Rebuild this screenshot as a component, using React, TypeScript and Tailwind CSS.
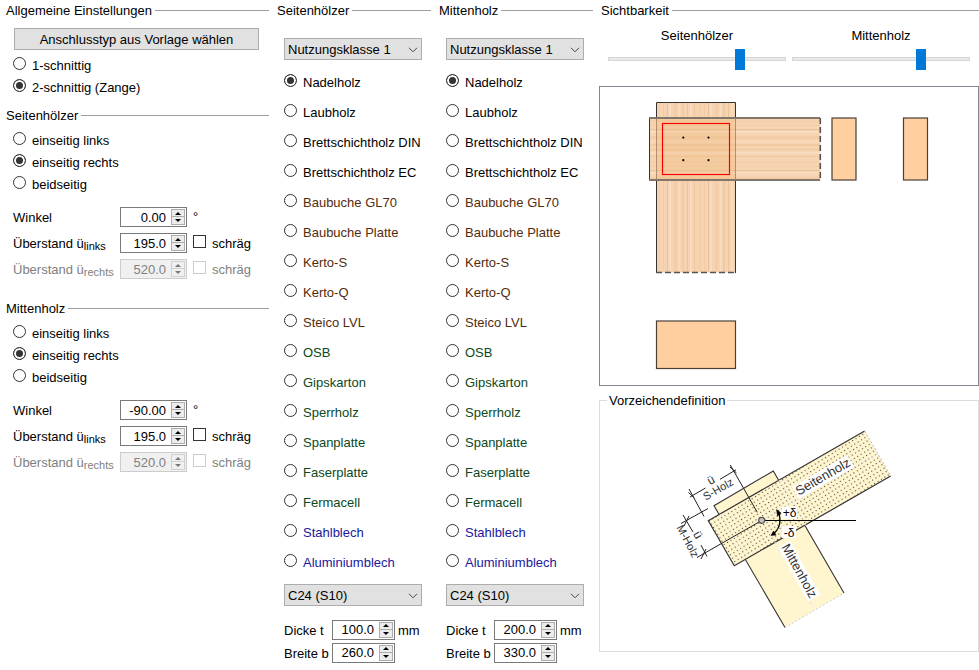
import React, { useState } from 'react'

const radioClass = 'h-[13px] w-[13px] shrink-0 appearance-none rounded-full border border-[#333] bg-white mb-[5px] checked:bg-[#333] checked:shadow-[inset_0_0_0_2px_white]'

const materials = [
  { name: 'Nadelholz', color: 'text-black' },
  { name: 'Laubholz', color: 'text-black' },
  { name: 'Brettschichtholz DIN', color: 'text-black' },
  { name: 'Brettschichtholz EC', color: 'text-black' },
  { name: 'Baubuche GL70', color: 'text-[#542c0c]' },
  { name: 'Baubuche Platte', color: 'text-[#542c0c]' },
  { name: 'Kerto-S', color: 'text-[#542c0c]' },
  { name: 'Kerto-Q', color: 'text-[#542c0c]' },
  { name: 'Steico LVL', color: 'text-[#542c0c]' },
  { name: 'OSB', color: 'text-[#0c4820]' },
  { name: 'Gipskarton', color: 'text-[#0c4820]' },
  { name: 'Sperrholz', color: 'text-[#0c4820]' },
  { name: 'Spanplatte', color: 'text-[#0c4820]' },
  { name: 'Faserplatte', color: 'text-[#0c4820]' },
  { name: 'Fermacell', color: 'text-[#0c4820]' },
  { name: 'Stahlblech', color: 'text-[#20189c]' },
  { name: 'Aluminiumblech', color: 'text-[#20189c]' },
]

const sides = ['einseitig links', 'einseitig rechts', 'beidseitig']

const Heading = ({ children }: { children: React.ReactNode }) => (
  <h2 className="flex h-5 items-center gap-[3px] whitespace-nowrap">
    <span className="pt-0.5">{children}</span>
    <span className="h-px flex-1 bg-[#a0a0a0]" />
  </h2>
)

const RadioRow = ({ name, label, checked, className }: { name: string; label: string; checked?: boolean; className: string }) => (
  <label className={`flex items-center gap-1.5 whitespace-nowrap pt-0.5 ${className}`}>
    <input type="radio" name={name} defaultChecked={checked} className={radioClass} />
    {label}
  </label>
)

const Spinner = ({ id, value, step = 1, disabled, className }: { id: string; value: string; step?: number; disabled?: boolean; className: string }) => {
  const [text, setText] = useState(value)
  const digits = value.split('.')[1].length
  const change = (d: number) => setText((Number(text) + d).toFixed(digits))
  const button = disabled ? 'border-[#d0d0d0] bg-[#f0f0f0]' : 'border-[#adadad] bg-[#ececec]'
  const fill = disabled ? '#777' : '#000'

  return (
    <div className={`flex h-5 items-center border pr-px ${disabled ? 'border-[#ccc] bg-[#f0f0f0] text-[#808080]' : 'border-[#7a7a7a] bg-white'} ${className}`}>
      <input
        id={id}
        type="text"
        value={text}
        disabled={disabled}
        onChange={(e) => setText(e.target.value)}
        className="h-full w-0 min-w-0 flex-1 bg-transparent pr-[5px] text-right outline-none"
      />
      <div className="flex w-3.5 flex-col">
        <button type="button" aria-label="mehr" disabled={disabled} onClick={() => change(step)} className={`flex h-2 items-center justify-center border ${button}`}>
          <svg width="6" height="3" viewBox="0 0 6 3"><path d="M3 0 L6 3 H0 Z" fill={fill} /></svg>
        </button>
        <button type="button" aria-label="weniger" disabled={disabled} onClick={() => change(-step)} className={`flex h-2 items-center justify-center border border-t-0 ${button}`}>
          <svg width="6" height="3" viewBox="0 0 6 3"><path d="M0 0 H6 L3 3 Z" fill={fill} /></svg>
        </button>
      </div>
    </div>
  )
}

const Dropdown = ({ label, options }: { label: string; options: string[] }) => (
  <div className="relative">
    <select aria-label={label} className="block h-[22px] w-full appearance-none border border-[#adadad] bg-[#e1e1e1] pl-[3px] pt-px outline-none">
      {options.map((o) => (
        <option key={o}>{o}</option>
      ))}
    </select>
    <svg className="pointer-events-none absolute right-1 top-[9px] h-[6px] w-[10px]" viewBox="0 0 10 6">
      <path d="M1 0.8 L5 4.8 L9 0.8" fill="none" stroke="#444" />
    </svg>
  </div>
)

const Overhang = ({ id, sub, value, disabled }: { id: string; sub: string; value: string; disabled?: boolean }) => (
  <div className={`flex h-[26px] items-center whitespace-nowrap ${disabled ? 'text-[#808080]' : ''}`}>
    <label htmlFor={id} className="w-[107px] pt-0.5">
      Überstand ü<sub className="bottom-[-2px] text-[11px]">{sub}</sub>
    </label>
    <Spinner id={id} value={value} disabled={disabled} className="w-[67px]" />
    <label className="ml-1.5 flex items-center gap-1.5 pt-0.5">
      <input
        type="checkbox"
        disabled={disabled}
        className={`mb-[5px] h-[13px] w-[13px] appearance-none border bg-white checked:bg-[#333] checked:shadow-[inset_0_0_0_2px_white] ${disabled ? 'border-[#ccc]' : 'border-[#333]'}`}
      />
      schräg
    </label>
  </div>
)

const Alignment = ({ id, title, angle }: { id: string; title: string; angle: string }) => (
  <section>
    <Heading>{title}</Heading>
    <div className="mt-1 pl-[7px]">
      {sides.map((side, i) => (
        <RadioRow key={side} name={id} label={side} checked={i === 1} className="h-[22px]" />
      ))}
      <div className="mt-[9px] flex h-[26px] items-center">
        <label htmlFor={`${id}-winkel`} className="w-[107px] pt-0.5">Winkel</label>
        <Spinner id={`${id}-winkel`} value={angle} className="w-[67px]" />
        <span className="ml-1.5">°</span>
      </div>
      <Overhang id={`${id}-links`} sub="links" value="195.0" />
      <Overhang id={`${id}-rechts`} sub="rechts" value="520.0" disabled />
    </div>
  </section>
)

const Material = ({ id, title, thickness, width }: { id: string; title: string; thickness: string; width: string }) => (
  <section className="w-[154px] shrink-0">
    <Heading>{title}</Heading>
    <div className="mt-[18px] pl-[7px] pr-[9px]">
      <Dropdown label="Nutzungsklasse" options={['Nutzungsklasse 1', 'Nutzungsklasse 2', 'Nutzungsklasse 3']} />
      <div className="mt-[7px]">
        {materials.map((m, i) => (
          <RadioRow key={m.name} name={`${id}-material`} label={m.name} checked={i === 0} className={`h-[30px] ${m.color}`} />
        ))}
      </div>
      <div className="mt-[7px]">
        <Dropdown label="Festigkeitsklasse" options={['C24 (S10)', 'C30 (S13)']} />
      </div>
    </div>
    <div className="mt-3 pl-[7px]">
      <div className="flex h-[23px] items-center">
        <label htmlFor={`${id}-dicke`} className="w-12 pt-0.5">Dicke t</label>
        <Spinner id={`${id}-dicke`} value={thickness} className="w-[63px]" />
        <span className="ml-[3px] pt-0.5">mm</span>
      </div>
      <div className="flex h-[23px] items-center">
        <label htmlFor={`${id}-breite`} className="w-12 pt-0.5">Breite b</label>
        <Spinner id={`${id}-breite`} value={width} className="w-[63px]" />
      </div>
    </div>
  </section>
)

const Slider = ({ label, value }: { label: string; value: number }) => (
  <label className="flex flex-1 flex-col text-center">
    <span className="leading-[22px]">{label}</span>
    <input
      type="range"
      min={0}
      max={100}
      defaultValue={value}
      className="mt-px h-[21px] w-full appearance-none bg-transparent [&::-webkit-slider-runnable-track]:h-1 [&::-webkit-slider-runnable-track]:border [&::-webkit-slider-runnable-track]:border-[#d6d6d6] [&::-webkit-slider-runnable-track]:bg-[#e7eaea] [&::-webkit-slider-thumb]:mt-[-9px] [&::-webkit-slider-thumb]:h-[21px] [&::-webkit-slider-thumb]:w-2.5 [&::-webkit-slider-thumb]:appearance-none [&::-webkit-slider-thumb]:bg-[#0078d7]"
    />
  </label>
)

// grain lines: offset, thickness, color
const grain: [number, number, string][] = [
  [2, 2, '#f4cfa9'],
  [7, 1, '#f3cca4'],
  [11, 1, '#e8c298'],
  [13, 2, '#f9dcbf'],
  [18, 3, '#f4cda8'],
  [23, 1, '#fadfc5'],
  [26, 2, '#f2caa1'],
  [31, 1, '#ebc59a'],
  [34, 2, '#f9dcc0'],
  [38, 1, '#f1c89d'],
]

const Connection = () => (
  <svg width="378" height="298" viewBox="600 87 378 298" className="block">
    <defs>
      <pattern id="grain-v" width="41" height="8" patternUnits="userSpaceOnUse" x="656">
        <rect width="41" height="8" fill="#f6d4b1" />
        {grain.map(([o, w, c]) => <rect key={o} x={o} width={w} height="8" fill={c} />)}
      </pattern>
      <pattern id="grain-h" width="8" height="41" patternUnits="userSpaceOnUse" y="118">
        <rect width="8" height="41" fill="#f6d4b1" />
        {grain.map(([o, w, c]) => <rect key={o} y={o} width="8" height={w} fill={c} />)}
      </pattern>
    </defs>
    <rect x="656.5" y="102.5" width="79" height="170" fill="url(#grain-v)" />
    <path d="M656.5 273 V102.5 H735.5 V273" fill="none" stroke="#333" />
    <path d="M656 272.5 H736" stroke="#555" strokeWidth="1.5" strokeDasharray="6 3" />
    <rect x="649.5" y="118" width="171" height="62" fill="url(#grain-h)" />
    <rect x="656.5" y="118" width="79" height="62" fill="#edb676" fillOpacity="0.3" stroke="#6b5136" strokeOpacity="0.5" />
    <path d="M649.5 118 V180" stroke="#333" />
    <path d="M649 118 H820 M649 180 H820" stroke="#82756a" strokeWidth="2" />
    <path d="M820.3 118 V181" stroke="#555" strokeWidth="1.6" strokeDasharray="6 3" />
    <rect x="662.5" y="123.5" width="67" height="51" fill="none" stroke="#f00" strokeWidth="1.2" />
    {[683.3, 708.5].map((x) => [137.6, 160.2].map((y) => <circle key={`${x}-${y}`} cx={x} cy={y} r="1.1" />))}
    <g fill="#ffcfa0" stroke="#4a4038" strokeWidth="1.2">
      <rect x="832" y="118" width="24" height="62" />
      <rect x="903.5" y="118" width="24" height="62" />
      <rect x="656.5" y="321" width="79" height="47.5" />
    </g>
  </svg>
)

const SignDefinition = () => (
  <svg width="240" height="210" viewBox="670 425 240 210" className="block" fontFamily="Liberation Sans, Arial, sans-serif">
    <defs>
      <pattern id="dots" width="4" height="4" patternUnits="userSpaceOnUse" patternTransform="rotate(-32)">
        <rect width="4" height="4" fill="#fff5cf" />
        <rect x="1" y="1" width="1.1" height="1.1" fill="#4f4a3c" />
      </pattern>
    </defs>
    <path d="M714 505.7 L773.3 471 L844 593 L785 627.5 Z" fill="#fff6d0" />
    <path d="M785 627.5 L714 505.7 L773.3 471 L844 593" fill="none" stroke="#333" strokeWidth="1.1" />
    <path d="M785 627.5 L844 593" stroke="#ccc" strokeDasharray="2 2" />
    <path d="M708.3 520.7 L864.7 431 L890.7 476 L734.3 565.7 Z" fill="url(#dots)" />
    <path d="M864.7 431 L708.3 520.7 L734.3 565.7 L890.7 476" fill="none" stroke="#333" strokeWidth="1.2" />
    <path d="M864.7 431 L890.7 476" stroke="#bbb" strokeDasharray="2 2" />
    <path d="M720 514 L747 558 M779 480 L806 526 M762 520 L879 453 M762 520 L813 607" fill="none" stroke="#e4e2ee" strokeDasharray="3 2" />

    <g stroke="#222" fill="none">
      <path d="M730.3 465 L757.3 512.3 M689 489 L704 516.5" />
      <path d="M690 497 L705.5 488 M720 479.3 L736 469.8" />
      <path d="M688.5 492.5 L694.5 498 M730 467 L736.5 473" />
      <path d="M681 523.5 L708 508.5 M697 557.5 L759 522" />
      <path d="M683 515 L693 532 M701 545 L707 556.5" />
      <path d="M684 526 L689 516 M701 559 L706 549" />
    </g>

    <g fill="#333">
      <text x="711" y="484" fontSize="12" textAnchor="middle" transform="rotate(-30 711 480)">ü</text>
      <text x="718" y="493" fontSize="11" textAnchor="middle" transform="rotate(-30 718 489)">S-Holz</text>
      <text x="698" y="539" fontSize="12" textAnchor="middle" transform="rotate(60 698 535)">ü</text>
      <text x="688" y="545" fontSize="11" textAnchor="middle" transform="rotate(62 688 541)">M-Holz</text>
      <g transform="rotate(-30 823 477)">
        <rect x="791" y="470" width="64" height="14" fill="#fff" />
        <text x="823" y="481" fontSize="13" textAnchor="middle">Seitenholz</text>
      </g>
      <g transform="rotate(61 799 571)">
        <rect x="768" y="564" width="62" height="14" fill="#fff" />
        <text x="799" y="575" fontSize="13" textAnchor="middle">Mittenholz</text>
      </g>
    </g>

    <rect x="782" y="507" width="15" height="12" fill="#fff" />
    <rect x="782" y="526" width="14" height="12" fill="#fff" />
    <text x="789.5" y="517" fontSize="12" textAnchor="middle">+δ</text>
    <text x="789" y="537" fontSize="12" textAnchor="middle">-δ</text>
    <path d="M765 520.5 H856" stroke="#000" strokeWidth="1.2" />
    <path d="M778.5 512 Q783 525 774 533.5" fill="none" stroke="#000" strokeWidth="1.2" />
    <path d="M776.5 509.5 L781 513 L777.5 516 Z M771 535.5 L773.5 531 L776 535 Z" stroke="#000" strokeWidth="0.5" />
    <circle cx="761.7" cy="520.3" r="3" fill="#c4c4c4" stroke="#555" strokeWidth="1.2" />
  </svg>
)

const App = () => {
  return (
    <main className="flex bg-white pl-1.5 font-['Liberation_Sans',Arial,sans-serif] text-[13px] leading-5 text-black">
      <div className="mr-2 w-[263px] shrink-0">
        <Heading>Allgemeine Einstellungen</Heading>
        <div className="mt-2 pl-2 pr-2.5">
          <button type="button" className="block h-[22px] w-full border border-[#adadad] bg-[#e1e1e1] pt-px leading-5">
            Anschlusstyp aus Vorlage wählen
          </button>
        </div>
        <div className="mb-[7px] mt-1 pl-[7px]">
          <RadioRow name="schnitt" label="1-schnittig" className="h-[22px]" />
          <RadioRow name="schnitt" label="2-schnittig (Zange)" checked className="h-[22px]" />
        </div>
        <Alignment id="seite" title="Seitenhölzer" angle="0.00" />
        <div className="mt-4">
          <Alignment id="mitte" title="Mittenholz" angle="-90.00" />
        </div>
      </div>

      <div className="mr-1.5 flex shrink-0 gap-2">
        <Material id="seitenholz" title="Seitenhölzer" thickness="100.0" width="260.0" />
        <Material id="mittenholz" title="Mittenholz" thickness="200.0" width="330.0" />
      </div>

      <div className="min-w-0 flex-1">
        <div className="pl-0.5">
          <Heading>Sichtbarkeit</Heading>
        </div>
        <div className="mt-[5px] flex gap-1.5 pl-[9px] pr-[9px]">
          <Slider label="Seitenhölzer" value={76} />
          <Slider label="Mittenholz" value={74} />
        </div>
        <div className="mt-[17px] overflow-hidden border border-[#828790]">
          <Connection />
        </div>
        <fieldset className="mt-[3px] border border-[#dcdcdc] pb-4">
          <legend className="ml-[7px] px-0.5 pt-0.5 leading-5">Vorzeichendefinition</legend>
          <div className="mt-3.5 pl-[70px]">
            <SignDefinition />
          </div>
        </fieldset>
      </div>
    </main>
  )
}

export default App
